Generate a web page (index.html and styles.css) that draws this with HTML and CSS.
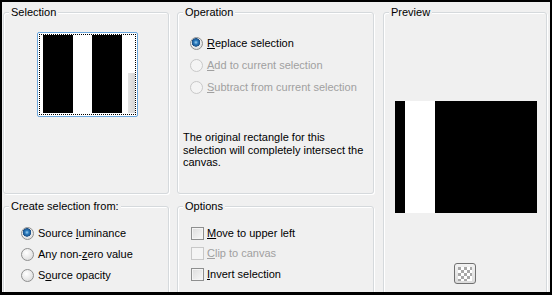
FILE: index.html
```html
<!doctype html>
<html>
  <head>
    <title>Selection from mask</title>
    <link rel="stylesheet" href="styles.css">
  </head>
  <body>
    <div class=dlg>
      <fieldset class="grp sel">
        <legend>Selection</legend>
        <div class=thumb>
          <div class=focus>
            <i class=blk style="width:30px"></i>
            <i class=wht style="width:20px"></i>
            <i class=blk style="width:30px"></i>
            <i class=wht style="width:6px"></i>
            <i class=bar></i>
          </div>
        </div>
      </fieldset>

      <fieldset class="grp op">
        <legend>Operation</legend>
        <div class=body>
          <label class=opt><span class="radio on"></span><span><u>R</u>eplace selection</span></label>
          <label class="opt off"><span class=radio></span><span><u>A</u>dd to current selection</span></label>
          <label class="opt off"><span class=radio></span><span><u>S</u>ubtract from current selection</span></label>
          <p class=note>The original rectangle for this<br>selection will completely intersect the<br>canvas.</p>
        </div>
      </fieldset>

      <fieldset class="grp prev">
        <legend>Preview</legend>
        <div class=pic>
          <i class=blk style="width:10px"></i>
          <i class=wht style="width:30px"></i>
          <i class=blk style="flex:1"></i>
        </div>
        <button class=chk>
          <svg width="14" height="14" viewBox="0 0 14 14">
            <rect width="14" height="14" fill="#fff"/>
            <path fill="#a8a8a8" d="M0 0h3v3H0zM6 0h3v3H6zM3 3h3v3H3zM9 3h3v3H9zM0 6h3v3H0zM6 6h3v3H6zM3 9h3v3H3zM9 9h3v3H9zM12 0h2v3h-2zM12 6h2v3h-2zM0 12h3v2H0zM6 12h3v2H6z"/>
          </svg>
        </button>
      </fieldset>

      <fieldset class="grp src">
        <legend>Create selection from:</legend>
        <div class=body>
          <label class=opt><span class="radio on"></span><span>Source <u>l</u>uminance</span></label>
          <label class=opt><span class=radio></span><span>Any non-<u>z</u>ero value</span></label>
          <label class=opt><span class=radio></span><span>S<u>o</u>urce opacity</span></label>
        </div>
      </fieldset>

      <fieldset class="grp opts">
        <legend>Options</legend>
        <div class=body>
          <label class=opt><span class=box></span><span><u>M</u>ove to upper left</span></label>
          <label class="opt off"><span class=box></span><span><u>C</u>lip to canvas</span></label>
          <label class=opt><span class=box></span><span><u>I</u>nvert selection</span></label>
        </div>
      </fieldset>
    </div>
  </body>
</html>
```

FILE: styles.css
```css
* {
  box-sizing: border-box;
}

html, body {
  margin: 0;
  height: 100%;
  background: #000;
}

.dlg {
  margin: 2px;
  height: calc(100% - 5px);
  background: #f0f0f0;
  overflow: hidden;
  padding: 4px 0 0 1px;
  display: grid;
  grid-template-columns: 166px 197px 165px;
  grid-template-rows: 188px 100px;
  column-gap: 8px;
  row-gap: 6px;
  font: 11px/13px "Liberation Sans", Arial, sans-serif;
  color: #000;
}

.grp {
  margin: 0;
  padding: 0;
  min-width: 0;
  border: 1px solid #d5d9dc;
  border-radius: 3px;
  box-shadow: 1px 1px 0 #fff, inset 1px 1px 0 #fff;
}

.grp legend {
  margin-left: 5px;
  padding: 0 2px;
  line-height: 13px;
  background: #f0f0f0;
}

.sel { grid-column: 1; grid-row: 1; }
.op { grid-column: 2; grid-row: 1; }
.prev { grid-column: 3; grid-row: 1 / 3; margin-left: 1px; }
.src { grid-column: 1; grid-row: 2; }
.opts { grid-column: 2; grid-row: 2; }

/* selection thumbnail */
.thumb {
  margin: 13px 0 0 33px;
  width: 101px;
  height: 85px;
  border: 1px solid #6aa6dc;
  border-radius: 2px;
  background: #fff;
  padding: 1px;
}

.focus {
  height: 100%;
  border: 1px dotted #000;
  display: flex;
  padding: 0 0 1px 3px;
}

.focus i, .pic i {
  display: block;
}

.blk { background: #000; }
.wht { background: #fff; }

.bar {
  width: 7px;
  margin-top: 38px;
  background: linear-gradient(90deg, #e4e4e4, #d6d6d6);
}

/* radio & check rows */
.body {
  padding-top: 13px;
}

.opt {
  display: flex;
  align-items: center;
  height: 22px;
  gap: 4px;
  white-space: nowrap;
}

.op .body { padding-left: 5px; }
.op .opt { margin-left: 7px; }

.src .body { padding: 10px 0 0 17px; }
.src .opt { height: 21px; }

.opts .body { padding: 10px 0 0 13px; }
.opts .opt { height: 20.5px; gap: 3px; }

.off { color: #a0a0a0; }

.radio {
  width: 13px;
  height: 13px;
  border-radius: 50%;
  border: 1px solid #8e8f8f;
  background: radial-gradient(circle at 40% 35%, #fff, #e2e2e2 70%, #cfcfcf);
  flex: none;
}

.radio.on {
  background:
    radial-gradient(circle at 45% 40%, #9fd0f2 0, #2a7bbd 2px, #1b4f86 4px, transparent 4.5px),
    radial-gradient(circle at 40% 35%, #fff, #e2e2e2 70%, #cfcfcf);
}

.off .radio {
  border-color: #c8c8c8;
  background: #f4f4f4;
}

.box {
  width: 13px;
  height: 13px;
  border: 1px solid #8e8f8f;
  background: linear-gradient(135deg, #dcdcdc, #f8f8f8);
  box-shadow: inset 0 0 0 1px #f4f4f4;
  flex: none;
}

.off .box {
  border-color: #c8c8c8;
  background: #f4f4f4;
}

.note {
  margin: 33px 0 0;
  line-height: 12.5px;
}

/* preview */
.pic {
  margin: 82px 0 0 11px;
  width: 142px;
  height: 112px;
  display: flex;
}

.chk {
  display: flex;
  align-items: center;
  justify-content: center;
  margin: 50px auto 0;
  width: 22px;
  height: 21px;
  padding: 0;
  border: 1px solid #707070;
  border-radius: 3px;
  background: linear-gradient(#f2f2f2, #dcdcdc);
}
```
